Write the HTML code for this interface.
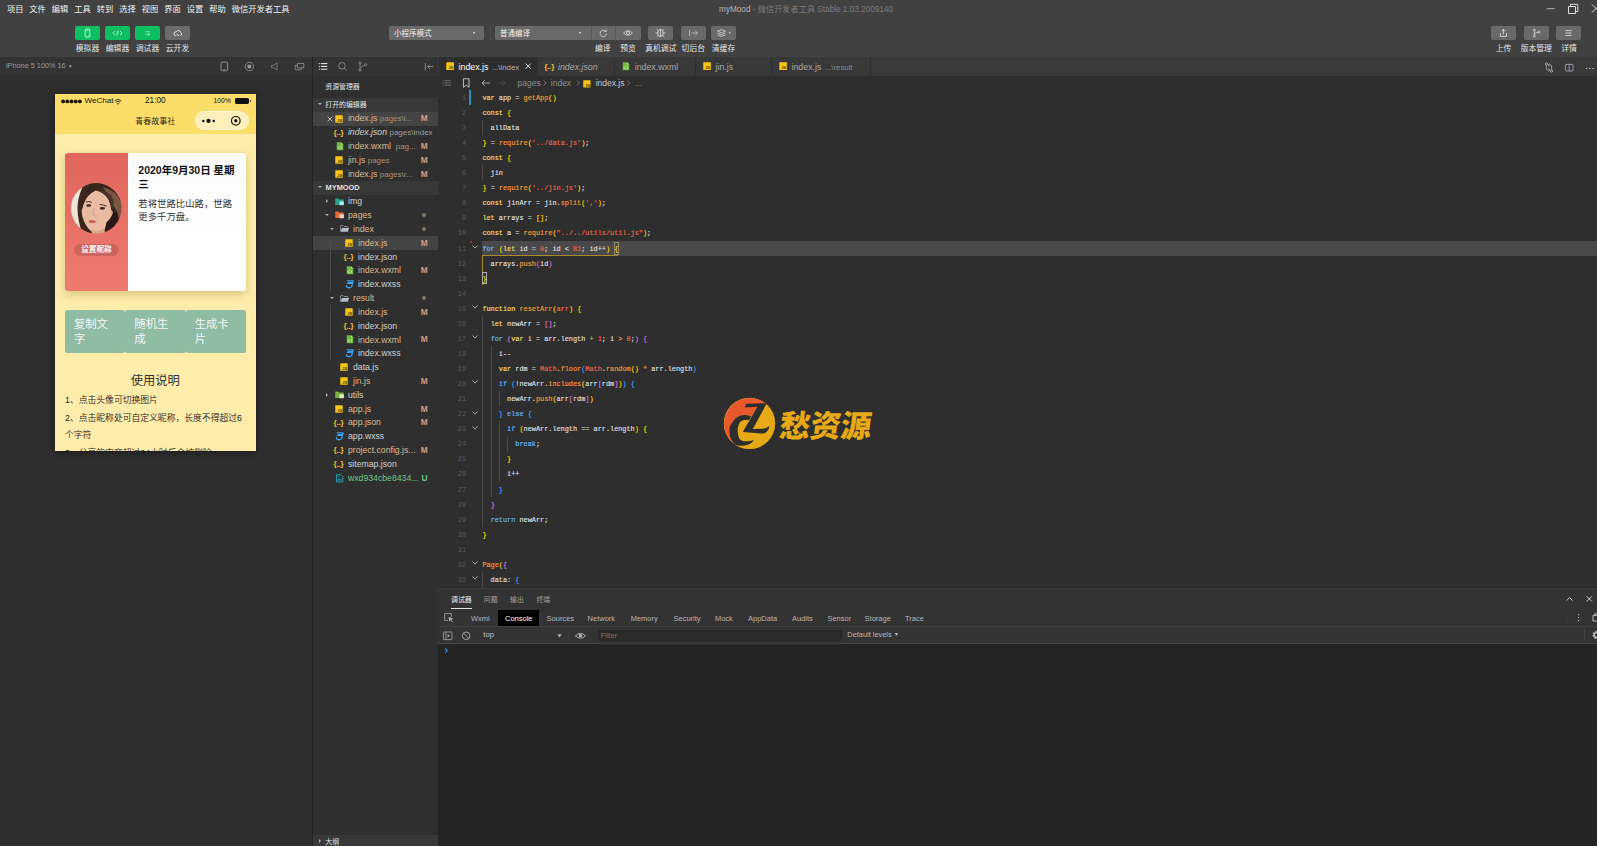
<!DOCTYPE html><html lang="zh"><head><meta charset="utf-8"><title>myMood</title><style>
*{box-sizing:border-box;margin:0;padding:0}
html,body{width:1597px;height:846px;overflow:hidden;background:#2e2e2e}
body{font-family:"Liberation Sans","Noto Sans CJK SC",sans-serif;color:#ddd;position:relative;font-size:8.2px}
.abs,.t{position:absolute;white-space:nowrap}
.t{line-height:12px;height:12px}
.c{transform:translateX(-50%)}
svg{position:absolute;overflow:visible}
#top{position:absolute;left:0;top:0;width:1597px;height:57px;background:#414141}
.menu{font-size:8.25px;color:#f0f0f0;top:3.7px}
.gbtn{position:absolute;top:26px;width:25px;height:14px;border-radius:2px;background:#0bbf62}
.gray{background:#6b6b6b}
.lbl{font-size:7.8px;color:#e6e6e6;top:42.9px}
.dd{position:absolute;top:26px;height:14px;background:#696969;border-radius:2px}
#simbar{position:absolute;left:0;top:57px;width:312px;height:18.3px;background:#333}
#sim{position:absolute;left:0;top:75.5px;width:312px;height:771px;background:#2e2e2e}
#vdiv{position:absolute;left:312px;top:57px;width:1px;height:789px;background:#232323}
#side{position:absolute;left:313px;top:57px;width:125px;height:789px;background:#2f2f2f}
#sidehead{position:absolute;left:0;top:0;width:125px;height:18.5px;background:#333}
.sec{position:absolute;left:0;width:125px;background:#383838}
.row{position:absolute;left:0;width:125px;height:13.82px}
.row.sel{background:#444}
.tree{font-size:8.7px;line-height:13.82px;height:13.82px;top:0.7px;color:#d0d0d0}
.mod{color:#dcb98e}
.unt{color:#6dc48c}
.dim{color:#9a9a9a;font-size:8px}.mod .dim{color:#a8906f}
.badge{position:absolute;top:0.6px;line-height:13.82px;font-size:8.3px;font-weight:bold;color:#cfa08a}
.dot{position:absolute;width:4px;height:4px;border-radius:2px;background:#86766a;left:109.3px;top:5px}
#ed{position:absolute;left:438px;top:57px;width:1159px;height:531px;background:#2e2e2e}
#tabs{position:absolute;left:0;top:0;width:1159px;height:18.8px;background:#393939}
.tab{position:absolute;top:0;height:18.8px;border-right:1px solid #2e2e2e;background:#383838}
.tab.act{background:#2e2e2e}
.tabt{font-size:8.8px;top:3.6px;color:#a8a8a8}
.code{position:absolute;left:44.4px;font-family:"Liberation Mono",monospace;font-size:6.87px;line-height:15.065px;height:15.065px;white-space:pre;color:#dcdcdc;-webkit-text-stroke:0.18px currentColor}
.ln{position:absolute;left:0;width:28px;text-align:right;font-family:"Liberation Mono",monospace;font-size:6.87px;line-height:15.065px;height:15.065px;color:#5a5a5a}
.k{color:#f0d868}.cl{color:#62b4f2}.f{color:#f09438}.s{color:#e8604c}.n{color:#e8604c}
.b1{color:#ffd700}.b2{color:#da70d6}.b3{color:#3aa0f5}.g{color:#8bc34a}
.ig{position:absolute;width:1px;background:#4a4a4a}
#panel{position:absolute;left:438px;top:588px;width:1159px;height:258px;background:#333}
.ptab{font-size:6.9px;color:#a0a0a0;top:5.6px}
.dt{font-size:7.5px;color:#b4b4b4;top:24.5px}
</style></head><body>
<div id="top">
<div class="t menu" style="left:7px">项目</div>
<div class="t menu" style="left:29.3px">文件</div>
<div class="t menu" style="left:51.8px">编辑</div>
<div class="t menu" style="left:74.2px">工具</div>
<div class="t menu" style="left:96.7px">转到</div>
<div class="t menu" style="left:119.2px">选择</div>
<div class="t menu" style="left:141.7px">视图</div>
<div class="t menu" style="left:164.2px">界面</div>
<div class="t menu" style="left:186.7px">设置</div>
<div class="t menu" style="left:209.2px">帮助</div>
<div class="t menu" style="left:231.8px">微信开发者工具</div>
<div class="t c" style="left:806px;top:4px;font-size:8.2px;color:#7c7c7c"><span style="color:#b4b4b4">myMood</span> - 微信开发者工具 Stable 1.03.2009140</div>
<svg style="left:1546px;top:3px" width="51" height="12" viewBox="0 0 51 12"><path d="M0.5 5.7h8" stroke="#aaa" stroke-width="1" fill="none"/><path d="M22.5 3.5h7v7h-7z M24.5 3.3v-2h7.3v7.3h-2" stroke="#ddd" stroke-width="1" fill="none"/><path d="M46 1.5l8 8M54 1.5l-8 8" stroke="#ddd" stroke-width="1" fill="none"/></svg>
<div class="gbtn " style="left:75px"><svg width="25" height="14" viewBox="0 0 25 14" style="left:0;top:0"><rect x="10.3" y="3" width="4.4" height="8" rx="0.6" fill="none" stroke="#e8fff2" stroke-width="0.9"/><path d="M11.3 4.6h2.4" stroke="#e8fff2" stroke-width="0.6"/></svg></div>
<div class="t lbl c" style="left:87.5px">模拟器</div>
<div class="gbtn " style="left:105px"><svg width="25" height="14" viewBox="0 0 25 14" style="left:0;top:0"><path d="M10 5l-2 2 2 2M15 5l2 2-2 2M13.3 4.6l-1.6 4.8" fill="none" stroke="#e8fff2" stroke-width="0.8"/></svg></div>
<div class="t lbl c" style="left:117.5px">编辑器</div>
<div class="gbtn " style="left:135px"><svg width="25" height="14" viewBox="0 0 25 14" style="left:0;top:0"><path d="M10.2 5.8h4.4l-1-1M14.8 8.4h-4.2M13 7.2l1.8 1.2-1.6 1.2" fill="none" stroke="#b4efd0" stroke-width="0.7"/></svg></div>
<div class="t lbl c" style="left:147.5px">调试器</div>
<div class="gbtn gray" style="left:165px"><svg width="25" height="14" viewBox="0 0 25 14" style="left:0;top:0"><path d="M10.8 9.8a2 2 0 0 1 0.4-4a2.4 2.4 0 0 1 4.4 0.6a1.8 1.8 0 0 1-0.4 3.4M11.5 8.2l2.5 1.6" fill="none" stroke="#eee" stroke-width="0.9"/></svg></div>
<div class="t lbl c" style="left:177.5px">云开发</div>
<div class="dd" style="left:389px;width:95px"><div class="t" style="left:5px;top:2.3px;font-size:7.5px;color:#f0f0f0">小程序模式</div><div class="abs" style="left:83.5px;top:6px;border:1.5px solid transparent;border-top:2px solid #eee"></div></div>
<div class="abs" style="left:489.5px;top:26px;width:1px;height:14px;background:#505050"></div>
<div class="dd" style="left:495px;width:146px"><div class="t" style="left:5px;top:2.3px;font-size:7.5px;color:#f0f0f0">普通编译</div><div class="abs" style="left:84px;top:6px;border:1.5px solid transparent;border-top:2px solid #eee"></div><div class="abs" style="left:95.5px;top:0;width:1px;height:14px;background:#5a5a5a"></div><div class="abs" style="left:120.3px;top:0;width:1px;height:14px;background:#5a5a5a"></div><svg width="146" height="14" viewBox="0 0 146 14" style="left:0;top:0"><path d="M110.6 5.2a3.2 3.2 0 1 0 0.9 2.6M111.3 3.4v2.2h-2.2" fill="none" stroke="#ddd" stroke-width="0.8"/><path d="M128.6 7q4.4-4.6 8.8 0q-4.4 4.6-8.8 0z" fill="none" stroke="#ddd" stroke-width="0.8"/><circle cx="133" cy="7" r="1.5" fill="none" stroke="#ddd" stroke-width="0.8"/></svg></div>
<div class="dd" style="left:648px;width:25px"><svg width="25" height="14" viewBox="0 0 25 14" style="left:0;top:0"><path d="M12.5 3.4a2.6 3.6 0 0 1 0 7.2a2.6 3.6 0 0 1 0-7.2zM12.5 3.6v7M9.9 7H7.6M15.1 7h2.3M10.3 4.6l-1.6-1.3M14.7 4.6l1.6-1.3M10.3 9.4l-1.6 1.3M14.7 9.4l1.6 1.3" fill="none" stroke="#e4e4e4" stroke-width="0.8"/></svg></div>
<div class="dd" style="left:681px;width:25px"><svg width="25" height="14" viewBox="0 0 25 14" style="left:0;top:0"><path d="M8.6 4v6M10.5 7h6M14.4 4.8l2.2 2.2-2.2 2.2" fill="none" stroke="#c8c8c8" stroke-width="0.8"/></svg></div>
<div class="dd" style="left:711px;width:25px"><svg width="25" height="14" viewBox="0 0 25 14" style="left:0;top:0"><path d="M10.5 3.6l4 1.6-4 1.6-4-1.6zM6.5 7l4 1.6 4-1.6M6.5 8.8l4 1.6 4-1.6" fill="none" stroke="#ddd" stroke-width="0.75"/><path d="M17.6 6.4h2.2l-1.1 1.4z" fill="#eee"/></svg></div>
<div class="t lbl c" style="left:602.7px">编译</div>
<div class="t lbl c" style="left:628px">预览</div>
<div class="t lbl c" style="left:660.8px">真机调试</div>
<div class="t lbl c" style="left:693.3px">切后台</div>
<div class="t lbl c" style="left:723.5px">清缓存</div>
<div class="dd" style="left:1491px;width:25px"><svg width="25" height="14" viewBox="0 0 25 14" style="left:0;top:0"><path d="M9.5 7v3.4h6V7M12.5 8.6V3.4M10.6 5.2l1.9-1.9 1.9 1.9" fill="none" stroke="#e4e4e4" stroke-width="0.8"/></svg></div>
<div class="dd" style="left:1524px;width:25px"><svg width="25" height="14" viewBox="0 0 25 14" style="left:0;top:0"><circle cx="10.4" cy="4.2" r="1" fill="none" stroke="#e4e4e4" stroke-width="0.7"/><circle cx="10.4" cy="10" r="1" fill="none" stroke="#e4e4e4" stroke-width="0.7"/><circle cx="15" cy="6" r="1" fill="none" stroke="#e4e4e4" stroke-width="0.7"/><path d="M10.4 5.2v3.8M10.4 8.6q0.4-1.8 3.6-2.2" fill="none" stroke="#e4e4e4" stroke-width="0.7"/></svg></div>
<div class="dd" style="left:1556.3px;width:25px"><svg width="25" height="14" viewBox="0 0 25 14" style="left:0;top:0"><path d="M9.5 4.6h6M9.5 7h6M9.5 9.4h6" fill="none" stroke="#e4e4e4" stroke-width="0.8"/></svg></div>
<div class="t lbl c" style="left:1503.6px">上传</div>
<div class="t lbl c" style="left:1536.3px">版本管理</div>
<div class="t lbl c" style="left:1569px">详情</div>
</div>
<div id="simbar"><div class="t" style="left:6px;top:3.3px;font-size:7.3px;color:#9a9a9a">iPhone 5 100% 16 <span style="font-size:5px;position:relative;top:-0.8px">▼</span></div>
<svg width="312" height="18.5" viewBox="0 0 312 18.5" style="left:0;top:0"><rect x="221" y="5.2" width="6.6" height="8.6" rx="1" fill="none" stroke="#aaa" stroke-width="0.8"/><path d="M223.3 12.5h2" stroke="#aaa" stroke-width="0.6"/><circle cx="249.4" cy="9.5" r="4.2" fill="none" stroke="#999" stroke-width="0.8"/><rect x="247.6" y="7.7" width="3.6" height="3.6" rx="0.6" fill="#999"/><path d="M271.6 8.3h1.8l3.6-2.4v7.2l-3.6-2.4h-1.8z" fill="none" stroke="#888" stroke-width="0.8"/><path d="M297.4 6.4h6.4v4.4h-6.4zM297 8.4h-1.8v4.4h6.2v-1.6" fill="none" stroke="#999" stroke-width="0.8"/></svg></div>
<div id="sim">
<div class="abs" style="left:55px;top:18.5px;width:201px;height:357px;background:#fdecaa;box-shadow:0 1px 7px rgba(0,0,0,.45);overflow:hidden;color:#222">
<div class="abs" style="left:0;top:0;width:201px;height:40px;background:#fbde6a"></div>
<div class="t" style="left:29.6px;top:1.1px;font-size:8.05px;color:#111">WeChat</div><svg width="22" height="5" viewBox="0 0 22 5" style="left:6px;top:4.9px"><circle cx="2.1" cy="2.4" r="1.95" fill="#1a1600"/><circle cx="6.3" cy="2.4" r="1.95" fill="#1a1600"/><circle cx="10.5" cy="2.4" r="1.95" fill="#1a1600"/><circle cx="14.7" cy="2.4" r="1.95" fill="#1a1600"/><circle cx="18.9" cy="2.4" r="1.95" fill="#1a1600"/></svg>
<svg width="8" height="6" viewBox="0 0 8 6" style="left:58.6px;top:4.6px"><path d="M0.6 2a4.8 4.8 0 0 1 6.8 0M1.8 3.3a3.1 3.1 0 0 1 4.4 0" fill="none" stroke="#2a2500" stroke-width="0.9"/><circle cx="4" cy="4.7" r="0.8" fill="#2a2500"/></svg>
<div class="t c" style="left:100.3px;top:1px;font-size:8.2px;color:#111">21:00</div>
<div class="t" style="left:158.5px;top:1.2px;font-size:6.8px;color:#111">100%</div>
<div class="abs" style="left:180px;top:4.2px;width:14.3px;height:5.6px;border:0.8px solid #111;border-radius:1.2px;background:#111"></div><div class="abs" style="left:194.6px;top:5.8px;width:1.2px;height:2.4px;background:#111;border-radius:0 1px 1px 0"></div>
<div class="t c" style="left:100.3px;top:21.6px;font-size:8px;color:#2a2a1a">青春故事社</div>
<div class="abs" style="left:140px;top:17px;width:54.2px;height:19.2px;border-radius:9.6px;background:#fdf0bc;border:0.5px solid rgba(255,255,255,.35)"></div>
<svg width="55" height="20" viewBox="0 0 55 20" style="left:140px;top:17px"><circle cx="8.3" cy="9.9" r="1.25" fill="#111"/><circle cx="13.5" cy="9.9" r="2.1" fill="#111"/><circle cx="18.7" cy="9.9" r="1.25" fill="#111"/><circle cx="40.8" cy="9.8" r="4.3" fill="none" stroke="#111" stroke-width="1.2"/><circle cx="40.8" cy="9.8" r="1.7" fill="#111"/></svg>
<div class="abs" style="left:10px;top:59px;width:181px;height:138.4px;border-radius:3px;background:linear-gradient(#fafafa,#fff 60%);box-shadow:0 3px 8px rgba(110,85,0,.28);overflow:hidden">
<div class="abs" style="left:0;top:0;width:63px;height:138.4px;background:linear-gradient(#e0665e,#ee7b70)"></div>
<svg width="50.6" height="50.6" viewBox="0 0 100 100" style="left:5.8px;top:30.1px"><defs><clipPath id="av"><circle cx="50" cy="50" r="50"/></clipPath><filter id="bl" x="-10%" y="-10%" width="120%" height="120%"><feGaussianBlur stdDeviation="1.3"/></filter></defs><g clip-path="url(#av)"><g filter="url(#bl)"><rect x="-5" y="-5" width="110" height="110" fill="#3a251e"/><path d="M-5 -5H30Q15 18 13 45Q12 72 24 105H-5z" fill="#ebe5d8"/><path d="M62 8Q90 14 100 40Q104 60 96 78Q92 50 78 30Q70 18 62 8z" fill="#7a5642"/><path d="M70 22Q86 34 90 56Q84 40 70 22z" fill="#9a7458"/><path d="M49 15Q38 19 30 30Q22 42 21 54Q21 66 26 76Q32 90 42 97L44 105H66L66 92Q74 84 78 72Q84 62 80 52Q78 36 70 26Q62 17 49 15z" fill="#e9bba2"/><path d="M40 92Q52 100 66 88L67 105H42z" fill="#d9a589"/><path d="M49 15Q38 19 29 32Q24 42 21 56Q17 38 27 24Q37 12 49 15z" fill="#3a251e"/><path d="M49 15Q64 18 74 32Q79 44 80 56Q88 44 82 30Q72 12 49 15z" fill="#4a3026"/><path d="M78 54Q86 56 82 68Q80 72 77 70z" fill="#e3b096"/><path d="M70 78Q80 70 84 56Q96 60 92 80Q84 98 68 100Q66 90 70 78z" fill="#2a1813"/><ellipse cx="35" cy="44.5" rx="5" ry="2.6" fill="#3b2a26"/><ellipse cx="62" cy="50" rx="5.4" ry="2.8" fill="#3b2a26"/><path d="M29 37.5Q35 35.5 41 38.5M56 42.5Q64 42 70 46" stroke="#5a3c30" stroke-width="2" fill="none"/><path d="M46 50Q42 60 45 64Q48 66 52 64" stroke="#d9a084" stroke-width="2" fill="none"/><path d="M35 74Q42 72 51 76Q44 82 36 78z" fill="#c9655e"/></g></g></svg>
<div class="abs" style="left:8.8px;top:90.7px;width:45.3px;height:12.3px;border-radius:6.2px;background:rgba(0,0,0,.13)"></div>
<div class="t c" style="left:31.4px;top:90.9px;font-size:7.6px;font-weight:bold;color:#fff">设置昵称</div>
<div class="abs" style="left:73.3px;top:11.4px;width:104px;font-size:10.5px;font-weight:bold;line-height:13.6px;color:#111;white-space:normal">2020年9月30日 星期三</div>
<div class="abs" style="left:73.3px;top:43.5px;width:100px;font-size:9.4px;line-height:13.9px;color:#333;white-space:normal">若将世路比山路，世路更多千万盘。</div>
</div>
<div class="abs" style="left:10.00px;top:216px;width:60.33px;height:43px;border-radius:2.5px;background:#90bba5"></div>
<div class="abs" style="left:19.00px;top:222.8px;font-size:11.3px;line-height:14.7px;color:#f4f8f5">复制文<br>字</div>
<div class="abs" style="left:70.33px;top:216px;width:60.33px;height:43px;border-radius:2.5px;background:#90bba5"></div>
<div class="abs" style="left:79.33px;top:222.8px;font-size:11.3px;line-height:14.7px;color:#f4f8f5">随机生<br>成</div>
<div class="abs" style="left:130.66px;top:216px;width:60.33px;height:43px;border-radius:2.5px;background:#90bba5"></div>
<div class="abs" style="left:139.66px;top:222.8px;font-size:11.3px;line-height:14.7px;color:#f4f8f5">生成卡<br>片</div>
<div class="t c" style="left:100.3px;top:279px;font-size:12.3px;line-height:16px;height:16px;color:#333">使用说明</div>
<div class="abs" style="left:10px;top:298px;width:181px;font-size:8.8px;line-height:17.55px;font-weight:350;color:#222;white-space:normal">1、点击头像可切换图片<br>2、点击昵称处可自定义昵称，长度不得超过6个字符<br>3、分享的内容超过24小时后会被删除</div>
</div>
</div>
<div id="vdiv"></div>
<div id="side"><div id="sidehead"><svg width="125" height="18.5" viewBox="0 0 125 18.5" style="left:0;top:0"><path d="M7.9 6.6h6.4M7.9 9.4h6.4M7.9 12.2h6.4" stroke="#f0f0f0" stroke-width="1"/><path d="M5.9 6.6h1M5.9 9.4h1M5.9 12.2h1" stroke="#f0f0f0" stroke-width="1"/><circle cx="29" cy="8.8" r="3.3" fill="none" stroke="#999" stroke-width="0.8"/><path d="M31.4 11.4l2.2 2.2" stroke="#999" stroke-width="0.8"/><circle cx="47" cy="6" r="1.1" fill="none" stroke="#999" stroke-width="0.7"/><circle cx="47" cy="13" r="1.1" fill="none" stroke="#999" stroke-width="0.7"/><circle cx="52.6" cy="7.8" r="1.1" fill="none" stroke="#999" stroke-width="0.7"/><path d="M47 7.1v4.8M47 11.6q0.6-2.4 4.6-3.2" fill="none" stroke="#999" stroke-width="0.7"/><path d="M112.4 6v7.2" stroke="#7b6fa8" stroke-width="1.2"/><path d="M120.4 9.6h-5.6M116.6 7.6l-2 2 2 2" fill="none" stroke="#999" stroke-width="0.8"/></svg></div>
<div class="t" style="left:12.3px;top:24.4px;font-size:6.9px;color:#e0e0e0">资源管理器</div>
<div class="sec" style="top:41px;height:14px"></div>
<div class="abs" style="left:4.6px;top:46.4px;border:2.1px solid transparent;border-top:2.6px solid #b0b0b0;border-bottom:0"></div>
<div class="t" style="left:12.3px;top:42.4px;font-size:6.9px;color:#e6e6e6">打开的编辑器</div>
<div class="row sel" style="top:54.70px"><svg width="6" height="6" viewBox="0 0 6 6" style="left:14px;top:4px"><path d="M0.6 0.6l4.8 4.8M5.4 0.6l-4.8 4.8" stroke="#d8d8d8" stroke-width="0.8"/></svg><svg width="8" height="8" viewBox="0 0 16 16" style="left:22.099999999999998px;top:2.9px"><rect x="0.5" y="0.5" width="15" height="15" rx="1" fill="#f5c518"/><text x="4.6" y="13.6" font-family="Liberation Sans,sans-serif" font-weight="bold" font-size="8" fill="#4a3b00">JS</text></svg><div class="t tree mod" style="left:34.9px;">index.js <span class="dim">pages\i...</span></div><div class="badge" style="left:107.8px;color:#cfa08a">M</div></div>
<div class="row" style="top:68.52px"><div class="abs" style="left:20.499999999999996px;top:0;line-height:13px;font-size:8.1px;font-weight:bold;color:#f2c230;letter-spacing:-0.3px">{<span style="position:relative;top:0.6px;letter-spacing:-0.2px">..</span>}</div><div class="t tree " style="left:34.9px;font-style:italic;">index.json <span class="dim" style="font-style:normal">pages\index</span></div></div>
<div class="row" style="top:82.34px"><svg width="8" height="8.6" viewBox="0 0 16 17" style="left:22.499999999999996px;top:2.6px"><path d="M1.5 0.5h8.5l4.5 4.5v11.5h-13z" fill="#72b840"/><path d="M10 0.5v4.5h4.5" fill="#b7e08e"/><path d="M6.6 8.6l-2.6 2.6 2.6 2.6M9.4 8.6l2.6 2.6-2.6 2.6" stroke="#e8ffd8" stroke-width="1.6" fill="none"/></svg><div class="t tree mod" style="left:34.9px;">index.wxml&nbsp; <span class="dim">pag...</span></div><div class="badge" style="left:107.8px;color:#cfa08a">M</div></div>
<div class="row" style="top:96.16px"><svg width="8" height="8" viewBox="0 0 16 16" style="left:22.099999999999998px;top:2.9px"><rect x="0.5" y="0.5" width="15" height="15" rx="1" fill="#f5c518"/><text x="4.6" y="13.6" font-family="Liberation Sans,sans-serif" font-weight="bold" font-size="8" fill="#4a3b00">JS</text></svg><div class="t tree mod" style="left:34.9px;">jin.js <span class="dim">pages</span></div><div class="badge" style="left:107.8px;color:#cfa08a">M</div></div>
<div class="row" style="top:109.98px"><svg width="8" height="8" viewBox="0 0 16 16" style="left:22.099999999999998px;top:2.9px"><rect x="0.5" y="0.5" width="15" height="15" rx="1" fill="#f5c518"/><text x="4.6" y="13.6" font-family="Liberation Sans,sans-serif" font-weight="bold" font-size="8" fill="#4a3b00">JS</text></svg><div class="t tree mod" style="left:34.9px;">index.js <span class="dim">pages\r...</span></div><div class="badge" style="left:107.8px;color:#cfa08a">M</div></div>
<div class="sec" style="top:123.80px;height:13.82px"></div>
<div class="abs" style="left:4.6px;top:129.20px;border:2.1px solid transparent;border-top:2.6px solid #b0b0b0;border-bottom:0"></div>
<div class="t" style="left:12.6px;top:124.70px;font-size:7.4px;font-weight:bold;color:#e0e0e0">MYMOOD</div>
<div class="row" style="top:137.62px"><div class="abs" style="left:12.799999999999999px;top:4.8px;border:2.1px solid transparent;border-left:2.6px solid #b0b0b0;border-right:0"></div><svg width="9.4" height="8" viewBox="0 0 19 16" style="left:21.599999999999998px;top:2.9px"><path d="M0.5 2q0-1.2 1.2-1.2h4.6l1.8 2h8.2q1.2 0 1.2 1.2v9q0 1.2-1.2 1.2H1.7q-1.2 0-1.2-1.2z" fill="#26a588"/><rect x="9" y="6.4" width="9" height="8.4" rx="1.6" fill="#a8e6f0"/></svg><div class="t tree " style="left:35px;">img</div></div>
<div class="row" style="top:151.44px"><div class="abs" style="left:12.2px;top:5.6px;border:2.1px solid transparent;border-top:2.6px solid #b0b0b0;border-bottom:0"></div><svg width="9.4" height="8" viewBox="0 0 19 16" style="left:21.599999999999998px;top:2.9px"><path d="M0.5 2q0-1.2 1.2-1.2h4.6l1.8 2h8.2q1.2 0 1.2 1.2v9q0 1.2-1.2 1.2H1.7q-1.2 0-1.2-1.2z" fill="#e8663c"/><rect x="9" y="6.4" width="9" height="8.4" rx="1.6" fill="#ffcfc0"/></svg><div class="t tree mod" style="left:35px;">pages</div><div class="dot"></div></div>
<div class="row" style="top:165.26px"><div class="abs" style="left:17.2px;top:5.6px;border:2.1px solid transparent;border-top:2.6px solid #b0b0b0;border-bottom:0"></div><svg width="9.6" height="7.6" viewBox="0 0 20 16" style="left:26.599999999999998px;top:3.1999999999999997px"><path d="M1 14V2.2q0-1 1-1h4.4l1.8 2h7.6q1 0 1 1v2" fill="none" stroke="#9aa4ae" stroke-width="1.6"/><path d="M1 14.4l3-8h15.2l-3 8z" fill="#b4bec8"/></svg><div class="t tree mod" style="left:40px;">index</div><div class="dot"></div></div>
<div class="row sel" style="top:179.08px"><svg width="8" height="8" viewBox="0 0 16 16" style="left:32.2px;top:2.9px"><rect x="0.5" y="0.5" width="15" height="15" rx="1" fill="#f5c518"/><text x="4.6" y="13.6" font-family="Liberation Sans,sans-serif" font-weight="bold" font-size="8" fill="#4a3b00">JS</text></svg><div class="t tree mod" style="left:45px;">index.js</div><div class="badge" style="left:107.8px;color:#cfa08a">M</div></div>
<div class="row" style="top:192.90px"><div class="abs" style="left:30.6px;top:0;line-height:13px;font-size:8.1px;font-weight:bold;color:#f2c230;letter-spacing:-0.3px">{<span style="position:relative;top:0.6px;letter-spacing:-0.2px">..</span>}</div><div class="t tree " style="left:45px;">index.json</div></div>
<div class="row" style="top:206.72px"><svg width="8" height="8.6" viewBox="0 0 16 17" style="left:32.6px;top:2.6px"><path d="M1.5 0.5h8.5l4.5 4.5v11.5h-13z" fill="#72b840"/><path d="M10 0.5v4.5h4.5" fill="#b7e08e"/><path d="M6.6 8.6l-2.6 2.6 2.6 2.6M9.4 8.6l2.6 2.6-2.6 2.6" stroke="#e8ffd8" stroke-width="1.6" fill="none"/></svg><div class="t tree mod" style="left:45px;">index.wxml</div><div class="badge" style="left:107.8px;color:#cfa08a">M</div></div>
<div class="row" style="top:220.54px"><svg width="9" height="8.6" viewBox="0 0 18 17" style="left:31.900000000000002px;top:2.6px"><path d="M3.4 1.4h13l-0.9 3H5.6M14.8 6.8H3.6M15.5 4.4l-2.2 9-5.4 2.2-5.2-2.2 0.7-3" fill="none" stroke="#3ea3f0" stroke-width="2.4" stroke-linejoin="round"/></svg><div class="t tree " style="left:45px;">index.wxss</div></div>
<div class="row" style="top:234.36px"><div class="abs" style="left:17.2px;top:5.6px;border:2.1px solid transparent;border-top:2.6px solid #b0b0b0;border-bottom:0"></div><svg width="9.6" height="7.6" viewBox="0 0 20 16" style="left:26.599999999999998px;top:3.1999999999999997px"><path d="M1 14V2.2q0-1 1-1h4.4l1.8 2h7.6q1 0 1 1v2" fill="none" stroke="#9aa4ae" stroke-width="1.6"/><path d="M1 14.4l3-8h15.2l-3 8z" fill="#b4bec8"/></svg><div class="t tree mod" style="left:40px;">result</div><div class="dot"></div></div>
<div class="row" style="top:248.18px"><svg width="8" height="8" viewBox="0 0 16 16" style="left:32.2px;top:2.9px"><rect x="0.5" y="0.5" width="15" height="15" rx="1" fill="#f5c518"/><text x="4.6" y="13.6" font-family="Liberation Sans,sans-serif" font-weight="bold" font-size="8" fill="#4a3b00">JS</text></svg><div class="t tree mod" style="left:45px;">index.js</div><div class="badge" style="left:107.8px;color:#cfa08a">M</div></div>
<div class="row" style="top:262.00px"><div class="abs" style="left:30.6px;top:0;line-height:13px;font-size:8.1px;font-weight:bold;color:#f2c230;letter-spacing:-0.3px">{<span style="position:relative;top:0.6px;letter-spacing:-0.2px">..</span>}</div><div class="t tree " style="left:45px;">index.json</div></div>
<div class="row" style="top:275.82px"><svg width="8" height="8.6" viewBox="0 0 16 17" style="left:32.6px;top:2.6px"><path d="M1.5 0.5h8.5l4.5 4.5v11.5h-13z" fill="#72b840"/><path d="M10 0.5v4.5h4.5" fill="#b7e08e"/><path d="M6.6 8.6l-2.6 2.6 2.6 2.6M9.4 8.6l2.6 2.6-2.6 2.6" stroke="#e8ffd8" stroke-width="1.6" fill="none"/></svg><div class="t tree mod" style="left:45px;">index.wxml</div><div class="badge" style="left:107.8px;color:#cfa08a">M</div></div>
<div class="row" style="top:289.64px"><svg width="9" height="8.6" viewBox="0 0 18 17" style="left:31.900000000000002px;top:2.6px"><path d="M3.4 1.4h13l-0.9 3H5.6M14.8 6.8H3.6M15.5 4.4l-2.2 9-5.4 2.2-5.2-2.2 0.7-3" fill="none" stroke="#3ea3f0" stroke-width="2.4" stroke-linejoin="round"/></svg><div class="t tree " style="left:45px;">index.wxss</div></div>
<div class="row" style="top:303.46px"><svg width="8" height="8" viewBox="0 0 16 16" style="left:27.2px;top:2.9px"><rect x="0.5" y="0.5" width="15" height="15" rx="1" fill="#f5c518"/><text x="4.6" y="13.6" font-family="Liberation Sans,sans-serif" font-weight="bold" font-size="8" fill="#4a3b00">JS</text></svg><div class="t tree " style="left:40px;">data.js</div></div>
<div class="row" style="top:317.28px"><svg width="8" height="8" viewBox="0 0 16 16" style="left:27.2px;top:2.9px"><rect x="0.5" y="0.5" width="15" height="15" rx="1" fill="#f5c518"/><text x="4.6" y="13.6" font-family="Liberation Sans,sans-serif" font-weight="bold" font-size="8" fill="#4a3b00">JS</text></svg><div class="t tree mod" style="left:40px;">jin.js</div><div class="badge" style="left:107.8px;color:#cfa08a">M</div></div>
<div class="row" style="top:331.10px"><div class="abs" style="left:12.799999999999999px;top:4.8px;border:2.1px solid transparent;border-left:2.6px solid #b0b0b0;border-right:0"></div><svg width="9.4" height="8" viewBox="0 0 19 16" style="left:21.599999999999998px;top:2.9px"><path d="M0.5 2q0-1.2 1.2-1.2h4.6l1.8 2h8.2q1.2 0 1.2 1.2v9q0 1.2-1.2 1.2H1.7q-1.2 0-1.2-1.2z" fill="#7cb342"/><rect x="9" y="6.4" width="9" height="8.4" rx="1.6" fill="#dcedc8"/></svg><div class="t tree " style="left:35px;">utils</div></div>
<div class="row" style="top:344.92px"><svg width="8" height="8" viewBox="0 0 16 16" style="left:22.2px;top:2.9px"><rect x="0.5" y="0.5" width="15" height="15" rx="1" fill="#f5c518"/><text x="4.6" y="13.6" font-family="Liberation Sans,sans-serif" font-weight="bold" font-size="8" fill="#4a3b00">JS</text></svg><div class="t tree mod" style="left:35px;">app.js</div><div class="badge" style="left:107.8px;color:#cfa08a">M</div></div>
<div class="row" style="top:358.74px"><div class="abs" style="left:20.599999999999998px;top:0;line-height:13px;font-size:8.1px;font-weight:bold;color:#f2c230;letter-spacing:-0.3px">{<span style="position:relative;top:0.6px;letter-spacing:-0.2px">..</span>}</div><div class="t tree mod" style="left:35px;">app.json</div><div class="badge" style="left:107.8px;color:#cfa08a">M</div></div>
<div class="row" style="top:372.56px"><svg width="9" height="8.6" viewBox="0 0 18 17" style="left:21.9px;top:2.6px"><path d="M3.4 1.4h13l-0.9 3H5.6M14.8 6.8H3.6M15.5 4.4l-2.2 9-5.4 2.2-5.2-2.2 0.7-3" fill="none" stroke="#3ea3f0" stroke-width="2.4" stroke-linejoin="round"/></svg><div class="t tree " style="left:35px;">app.wxss</div></div>
<div class="row" style="top:386.38px"><div class="abs" style="left:20.599999999999998px;top:0;line-height:13px;font-size:8.1px;font-weight:bold;color:#f2c230;letter-spacing:-0.3px">{<span style="position:relative;top:0.6px;letter-spacing:-0.2px">..</span>}</div><div class="t tree mod" style="left:35px;">project.config.js...</div><div class="badge" style="left:107.8px;color:#cfa08a">M</div></div>
<div class="row" style="top:400.20px"><div class="abs" style="left:20.599999999999998px;top:0;line-height:13px;font-size:8.1px;font-weight:bold;color:#f2c230;letter-spacing:-0.3px">{<span style="position:relative;top:0.6px;letter-spacing:-0.2px">..</span>}</div><div class="t tree " style="left:35px;">sitemap.json</div></div>
<div class="row" style="top:414.02px"><svg width="7.4" height="8.6" viewBox="0 0 15 17" style="left:22.8px;top:2.6px"><path d="M1 1h8.5l4.5 4.5v10.5h-13z" fill="none" stroke="#26a6b8" stroke-width="1.8"/><path d="M2 13l3.6-4 2.6 2.6 2-1.6 2.8 3z" fill="#26a6b8"/><circle cx="5" cy="5.4" r="1.4" fill="#26a6b8"/></svg><div class="t tree unt" style="left:35px;">wxd934cbe8434...</div><div class="badge" style="left:108.6px;color:#6dc48c">U</div></div>
<div class="ig" style="left:17.4px;top:179.08px;height:55.28px"></div>
<div class="ig" style="left:17.4px;top:248.18px;height:55.28px"></div>
<div class="sec" style="top:778px;height:11px"></div>
<div class="abs" style="left:5.6px;top:782px;border:2.1px solid transparent;border-left:2.6px solid #b0b0b0;border-right:0"></div>
<div class="t" style="left:12.3px;top:778.8px;font-size:6.9px;color:#e6e6e6">大纲</div>
</div>
<div id="ed"><div id="tabs">
<div class="tab act" style="left:1px;width:99px"><svg width="8.2" height="8.2" viewBox="0 0 16 16" style="left:6.9px;top:4.9px"><rect x="0.5" y="0.5" width="15" height="15" rx="1" fill="#f5c518"/><text x="4.6" y="13.6" font-family="Liberation Sans,sans-serif" font-weight="bold" font-size="8" fill="#4a3b00">JS</text></svg><div class="t tabt" style="left:19.6px;color:#fff">index.js <span style="font-size:7.8px;color:#b0b0b0;margin-left:1px">...\index</span></div><svg width="6.4" height="6.4" viewBox="0 0 6.4 6.4" style="left:85.6px;top:6.3px"><path d="M0.6 0.6l5.2 5.2M5.8 0.6l-5.2 5.2" stroke="#f0f0f0" stroke-width="0.9"/></svg></div>
<div class="tab" style="left:100px;width:77px"><div class="abs" style="left:6.199999999999999px;top:2.6px;line-height:13px;font-size:8.1px;font-weight:bold;color:#f2c230;letter-spacing:-0.3px">{<span style="position:relative;top:0.6px;letter-spacing:-0.2px">..</span>}</div><div class="t tabt" style="left:20px;font-style:italic">index.json</div></div>
<div class="tab" style="left:177px;width:81px"><svg width="8" height="8.6" viewBox="0 0 16 17" style="left:6.7px;top:5px"><path d="M1.5 0.5h8.5l4.5 4.5v11.5h-13z" fill="#72b840"/><path d="M10 0.5v4.5h4.5" fill="#b7e08e"/><path d="M6.6 8.6l-2.6 2.6 2.6 2.6M9.4 8.6l2.6 2.6-2.6 2.6" stroke="#e8ffd8" stroke-width="1.6" fill="none"/></svg><div class="t tabt" style="left:19.7px">index.wxml</div></div>
<div class="tab" style="left:258px;width:76px"><svg width="8.2" height="8.2" viewBox="0 0 16 16" style="left:6.6px;top:4.9px"><rect x="0.5" y="0.5" width="15" height="15" rx="1" fill="#f5c518"/><text x="4.6" y="13.6" font-family="Liberation Sans,sans-serif" font-weight="bold" font-size="8" fill="#4a3b00">JS</text></svg><div class="t tabt" style="left:19.5px">jin.js</div></div>
<div class="tab" style="left:334px;width:99px"><svg width="8.2" height="8.2" viewBox="0 0 16 16" style="left:6.6px;top:4.9px"><rect x="0.5" y="0.5" width="15" height="15" rx="1" fill="#f5c518"/><text x="4.6" y="13.6" font-family="Liberation Sans,sans-serif" font-weight="bold" font-size="8" fill="#4a3b00">JS</text></svg><div class="t tabt" style="left:19.5px">index.js <span style="font-size:7.8px;color:#8a8a8a;margin-left:1px">...\result</span></div></div>
<svg width="60" height="18.5" viewBox="0 0 60 18.5" style="left:1099px;top:0"><circle cx="9.4" cy="7" r="1.1" fill="none" stroke="#ccc" stroke-width="0.7"/><circle cx="14.6" cy="14" r="1.1" fill="none" stroke="#ccc" stroke-width="0.7"/><path d="M9.4 8.1v3.6q0 1.4 1.4 1.4h1.2M14.6 12.9V9.3q0-1.4-1.4-1.4h-1.2M11.6 11.6l1.4 1.5-1.4 1.5M12.6 6.4l-1.4 1.5 1.4 1.5" fill="none" stroke="#ccc" stroke-width="0.7"/><rect x="28.4" y="7.4" width="7.6" height="6.6" rx="0.6" fill="none" stroke="#b8a8c8" stroke-width="0.8"/><path d="M32.2 7.4v6.6" stroke="#b8a8c8" stroke-width="0.8"/><circle cx="49.6" cy="11.4" r="0.7" fill="#ccc"/><circle cx="52.8" cy="11.4" r="0.7" fill="#ccc"/><circle cx="56" cy="11.4" r="0.7" fill="#ccc"/></svg>
</div>
<svg width="80" height="14" viewBox="0 0 80 14" style="left:0;top:19.4px"><path d="M6.6 4.8h6.4M6.6 7h6.4M6.6 9.2h6.4" stroke="#7c7c7c" stroke-width="0.8"/><path d="M4.6 4.8h1M4.6 7h1M4.6 9.2h1" stroke="#7c7c7c" stroke-width="0.8"/><path d="M25.4 2.8h5.6v8.6l-2.8-2.4-2.8 2.4z" fill="none" stroke="#c8c8c8" stroke-width="0.9"/><path d="M52 7h-8M46.8 4.2l-2.8 2.8 2.8 2.8" fill="none" stroke="#c0c0c0" stroke-width="0.8"/><path d="M61 7h6.4M64.8 4.4l2.6 2.6-2.6 2.6" fill="none" stroke="#555" stroke-width="0.8"/></svg>
<div class="t" style="left:79.5px;top:20.2px;font-size:8.5px;color:#8c8c8c">pages</div>
<div class="t" style="left:112.8px;top:20.2px;font-size:8.5px;color:#8c8c8c">index</div>
<div class="t" style="left:157.7px;top:20.2px;font-size:8.5px;color:#c8c8c8">index.js</div>
<div class="t" style="left:197px;top:20.2px;font-size:8.5px;color:#8c8c8c">...</div>
<svg width="200" height="14" viewBox="0 0 200 14" style="left:0;top:19.4px"><path d="M105.6 4.6l2.4 2.4-2.4 2.4M139 4.6l2.4 2.4-2.4 2.4M189.4 4.6l2.4 2.4-2.4 2.4" fill="none" stroke="#8c8c8c" stroke-width="0.8"/></svg>
<svg width="7.8" height="7.8" viewBox="0 0 16 16" style="left:145.2px;top:22.6px"><rect x="0.5" y="0.5" width="15" height="15" rx="1" fill="#f5c518"/><text x="4.6" y="13.6" font-family="Liberation Sans,sans-serif" font-weight="bold" font-size="8" fill="#4a3b00">JS</text></svg>
<div class="abs" style="left:44.4px;top:183.90px;width:1115px;height:14.66px;background:#494949"></div>
<div class="abs" style="left:44px;top:197.96px;width:136px;height:1px;background:#a98a2a"></div>
<div class="abs" style="left:44px;top:197.96px;width:1px;height:30.13px;background:#a98a2a"></div>
<div class="abs" style="left:176.2px;top:185.30px;width:4.4px;height:12.66px;border:0.8px solid #8a8a6a"></div>
<div class="abs" style="left:44.4px;top:215.43px;width:4.4px;height:12.06px;border:0.8px solid #b0b0b0"></div>
<div class="ln" style="top:33.85px">1</div><div class="code" style="top:33.85px"><span class="k">var</span> app = <span class="f">getApp</span><span class="b1">()</span></div>
<div class="ln" style="top:48.91px">2</div><div class="code" style="top:48.91px"><span class="k">const</span> <span class="b1">{</span></div>
<div class="ln" style="top:63.98px">3</div><div class="code" style="top:63.98px">  allData</div>
<div class="ln" style="top:79.05px">4</div><div class="code" style="top:79.05px"><span class="b1">}</span> = <span class="f">require</span><span class="b1">(</span><span class="s">&#x27;../data.js&#x27;</span><span class="b1">)</span>;</div>
<div class="ln" style="top:94.11px">5</div><div class="code" style="top:94.11px"><span class="k">const</span> <span class="b1">{</span></div>
<div class="ln" style="top:109.17px">6</div><div class="code" style="top:109.17px">  jin</div>
<div class="ln" style="top:124.24px">7</div><div class="code" style="top:124.24px"><span class="b1">}</span> = <span class="f">require</span><span class="b1">(</span><span class="s">&#x27;../jin.js&#x27;</span><span class="b1">)</span>;</div>
<div class="ln" style="top:139.31px">8</div><div class="code" style="top:139.31px"><span class="k">const</span> jinArr = jin.<span class="f">split</span><span class="b1">(</span><span class="s">&#x27;,&#x27;</span><span class="b1">)</span>;</div>
<div class="ln" style="top:154.37px">9</div><div class="code" style="top:154.37px"><span class="k">let</span> arrays = <span class="b1">[]</span>;</div>
<div class="ln" style="top:169.44px">10</div><div class="code" style="top:169.44px"><span class="k">const</span> a = <span class="f">require</span><span class="b1">(</span><span class="s">&quot;../../utils/util.js&quot;</span><span class="b1">)</span>;</div>
<div class="ln" style="top:184.50px">11</div><div class="code" style="top:184.50px"><span class="cl">for</span> <span class="b1">(</span><span class="k">let</span> id = <span class="n">0</span>; id &lt; <span class="n">81</span>; id++<span class="b1">)</span> <span class="b1">{</span></div>
<div class="ln" style="top:199.56px">12</div><div class="code" style="top:199.56px">  arrays.<span class="f">push</span><span class="b2">(</span>id<span class="b2">)</span></div>
<div class="ln" style="top:214.63px">13</div><div class="code" style="top:214.63px"><span class="b1">}</span></div>
<div class="ln" style="top:229.69px">14</div><div class="code" style="top:229.69px"></div>
<div class="ln" style="top:244.76px">15</div><div class="code" style="top:244.76px"><span class="k">function</span> <span class="f">resetArr</span><span class="b1">(</span><span class="n">arr</span><span class="b1">)</span> <span class="b1">{</span></div>
<div class="ln" style="top:259.82px">16</div><div class="code" style="top:259.82px">  <span class="k">let</span> newArr = <span class="b2">[]</span>;</div>
<div class="ln" style="top:274.89px">17</div><div class="code" style="top:274.89px">  <span class="cl">for</span> <span class="b2">(</span><span class="k">var</span> i = arr.length <span class="g">+</span> <span class="n">1</span>; i <span class="f">&gt;</span> <span class="n">0</span>;<span class="b2">)</span> <span class="b2">{</span></div>
<div class="ln" style="top:289.96px">18</div><div class="code" style="top:289.96px">    i<span class="ln2">--</span></div>
<div class="ln" style="top:305.02px">19</div><div class="code" style="top:305.02px">    <span class="k">var</span> rdm = <span class="n">Math</span>.<span class="f">floor</span><span class="b3">(</span><span class="n">Math</span>.<span class="f">random</span><span class="b1">()</span> <span class="f">*</span> arr.length<span class="b3">)</span></div>
<div class="ln" style="top:320.09px">20</div><div class="code" style="top:320.09px">    <span class="cl">if</span> <span class="b3">(</span>!newArr.<span class="f">includes</span><span class="b1">(</span>arr<span class="b2">[</span>rdm<span class="b2">]</span><span class="b1">)</span><span class="b3">)</span> <span class="b3">{</span></div>
<div class="ln" style="top:335.15px">21</div><div class="code" style="top:335.15px">      newArr.<span class="f">push</span><span class="b1">(</span>arr<span class="b2">[</span>rdm<span class="b2">]</span><span class="b1">)</span></div>
<div class="ln" style="top:350.22px">22</div><div class="code" style="top:350.22px">    <span class="b3">}</span> <span class="cl">else</span> <span class="b3">{</span></div>
<div class="ln" style="top:365.28px">23</div><div class="code" style="top:365.28px">      <span class="cl">if</span> <span class="b1">(</span>newArr.length == arr.length<span class="b1">)</span> <span class="b1">{</span></div>
<div class="ln" style="top:380.35px">24</div><div class="code" style="top:380.35px">        <span class="cl">break</span>;</div>
<div class="ln" style="top:395.41px">25</div><div class="code" style="top:395.41px">      <span class="b1">}</span></div>
<div class="ln" style="top:410.48px">26</div><div class="code" style="top:410.48px">      i++</div>
<div class="ln" style="top:425.54px">27</div><div class="code" style="top:425.54px">    <span class="b3">}</span></div>
<div class="ln" style="top:440.61px">28</div><div class="code" style="top:440.61px">  <span class="b2">}</span></div>
<div class="ln" style="top:455.67px">29</div><div class="code" style="top:455.67px">  <span class="cl">return</span> newArr;</div>
<div class="ln" style="top:470.74px">30</div><div class="code" style="top:470.74px"><span class="b1">}</span></div>
<div class="ln" style="top:485.80px">31</div><div class="code" style="top:485.80px"></div>
<div class="ln" style="top:500.87px">32</div><div class="code" style="top:500.87px"><span class="f">Page</span><span class="b1">(</span><span class="b2">{</span></div>
<div class="ln" style="top:515.93px">33</div><div class="code" style="top:515.93px">  data<span>:</span> <span class="b3">{</span></div>
<div class="abs" style="left:31px;top:33.05px;width:2.2px;height:14.56px;background:#2693ba"></div>
<svg width="6" height="4" viewBox="0 0 6 4" style="left:34.2px;top:187.90px"><path d="M0.5 0.5l2.5 2.6 2.5-2.6" fill="none" stroke="#c0c0c0" stroke-width="0.8"/></svg>
<svg width="6" height="4" viewBox="0 0 6 4" style="left:34.2px;top:248.16px"><path d="M0.5 0.5l2.5 2.6 2.5-2.6" fill="none" stroke="#c0c0c0" stroke-width="0.8"/></svg>
<svg width="6" height="4" viewBox="0 0 6 4" style="left:34.2px;top:278.29px"><path d="M0.5 0.5l2.5 2.6 2.5-2.6" fill="none" stroke="#c0c0c0" stroke-width="0.8"/></svg>
<svg width="6" height="4" viewBox="0 0 6 4" style="left:34.2px;top:323.49px"><path d="M0.5 0.5l2.5 2.6 2.5-2.6" fill="none" stroke="#c0c0c0" stroke-width="0.8"/></svg>
<svg width="6" height="4" viewBox="0 0 6 4" style="left:34.2px;top:353.62px"><path d="M0.5 0.5l2.5 2.6 2.5-2.6" fill="none" stroke="#c0c0c0" stroke-width="0.8"/></svg>
<svg width="6" height="4" viewBox="0 0 6 4" style="left:34.2px;top:368.68px"><path d="M0.5 0.5l2.5 2.6 2.5-2.6" fill="none" stroke="#c0c0c0" stroke-width="0.8"/></svg>
<svg width="6" height="4" viewBox="0 0 6 4" style="left:34.2px;top:504.26px"><path d="M0.5 0.5l2.5 2.6 2.5-2.6" fill="none" stroke="#c0c0c0" stroke-width="0.8"/></svg>
<svg width="6" height="4" viewBox="0 0 6 4" style="left:34.2px;top:519.33px"><path d="M0.5 0.5l2.5 2.6 2.5-2.6" fill="none" stroke="#c0c0c0" stroke-width="0.8"/></svg>
<div class="abs" style="left:31.6px;top:183.50px;width:2px;height:2px;background:#d03030;border-radius:1px"></div>
<div class="ig" style="left:44.40px;top:63.18px;height:15.06px;background:#484848"></div>
<div class="ig" style="left:44.40px;top:108.38px;height:15.06px;background:#484848"></div>
<div class="ig" style="left:44.40px;top:259.02px;height:210.91px;background:#484848"></div>
<div class="ig" style="left:52.64px;top:289.16px;height:150.65px;background:#484848"></div>
<div class="ig" style="left:60.89px;top:334.35px;height:15.06px;background:#484848"></div>
<div class="ig" style="left:60.89px;top:364.48px;height:60.26px;background:#484848"></div>
<div class="ig" style="left:69.13px;top:379.55px;height:15.06px;background:#484848"></div>
<div class="ig" style="left:44.40px;top:515.13px;height:15.06px;background:#484848"></div>
<svg width="160" height="60" viewBox="0 0 160 60" style="left:282px;top:337px"><circle cx="29.5" cy="29.4" r="25.7" fill="#e8a917"/><path d="M44.5 8.6A25.7 25.7 0 0 0 13.1 49.2L9.3 37.3Q9 33 12.4 28.3Q14.5 23.5 20.7 21.4Q25 20.5 31.3 22.2L37.3 12.75z" fill="#e85a2e"/><path d="M26 9.7L45.6 9.3L46.4 10.1L32.8 35.1L43.4 34.7Q47 34.2 49.4 32L49.4 32.4Q48.5 37 44.5 39.2Q42 39.8 41 39.6L23 38.1L22.9 37.7L37.3 12.75L24.9 13.5z" fill="#2e2e2e"/><path d="M31.3 22.2Q25 20.5 20.7 21.4Q14.5 23.5 12.4 28.3Q9 33 9.3 37.3Q9.5 42.5 11.6 46.4L14.6 50.2Q18.5 52.2 23 51.7Q27.5 51.2 30.5 49.4Q32.8 48 33.9 46Q31 47 28.3 47.2Q24.5 47.5 21.4 46.4Q19 44.8 18.4 41.9Q17.3 38 17.8 34.3Q18.3 30.8 19.9 28.3Q21.8 26.5 24.5 26L29 26z" fill="#2e2e2e"/><text x="63.7" y="42.9" font-family="Noto Sans CJK SC,Liberation Sans,sans-serif" font-weight="900" font-size="30.8" fill="#e8a917" transform="skewX(-7)" style="letter-spacing:-0.2px">愁资源</text></svg>
</div>
<div id="panel">
<div class="abs" style="left:0;top:0;width:1159px;height:1px;background:#3e3e3e"></div>
<div class="t ptab" style="left:13px;color:#f0f0f0">调试器</div>
<div class="t ptab" style="left:45.8px;">问题</div>
<div class="t ptab" style="left:72px;">输出</div>
<div class="t ptab" style="left:98.4px;">终端</div>
<div class="abs" style="left:13px;top:20px;width:21px;height:1px;background:#e0e0e0"></div>
<svg width="40" height="12" viewBox="0 0 40 12" style="left:1126px;top:5.4px"><path d="M2.6 7.6l3-3 3 3" fill="none" stroke="#ddd" stroke-width="0.9"/><path d="M22.6 3.2l5.4 5.4M28 3.2l-5.4 5.4" stroke="#ddd" stroke-width="0.9"/></svg>
<div class="abs" style="left:0;top:21.5px;width:1159px;height:17.4px;background:#333;border-bottom:1px solid #3f3f3f"></div>
<div class="abs" style="left:60.2px;top:21.5px;width:41px;height:16.4px;background:#000"></div>
<div class="t dt" style="left:32.9px;">Wxml</div>
<div class="t dt" style="left:67px;color:#fff">Console</div>
<div class="t dt" style="left:108.6px;">Sources</div>
<div class="t dt" style="left:149.6px;">Network</div>
<div class="t dt" style="left:192.7px;">Memory</div>
<div class="t dt" style="left:235.5px;">Security</div>
<div class="t dt" style="left:276.9px;">Mock</div>
<div class="t dt" style="left:310px;">AppData</div>
<div class="t dt" style="left:354px;">Audits</div>
<div class="t dt" style="left:389.4px;">Sensor</div>
<div class="t dt" style="left:426.6px;">Storage</div>
<div class="t dt" style="left:467px;">Trace</div>
<svg width="12" height="12" viewBox="0 0 12 12" style="left:5px;top:24.4px"><path d="M5.2 8.4H1.6V1.6h6.8v3.2" fill="none" stroke="#aaa" stroke-width="0.8"/><path d="M5.6 4.8l4.6 2-2 0.6 1.6 2-0.8 0.6-1.6-2-1.2 1.6z" fill="#bbb"/></svg>
<svg width="30" height="14" viewBox="0 0 30 14" style="left:1130px;top:23px"><path d="M-1.3 3v7" stroke="#444" stroke-width="0.7"/><circle cx="10.6" cy="3.6" r="0.7" fill="#bbb"/><circle cx="10.6" cy="6.6" r="0.7" fill="#bbb"/><circle cx="10.6" cy="9.6" r="0.7" fill="#bbb"/><path d="M25 4.4h5v5.6h-5zM26.6 4.2V2.8h4" fill="none" stroke="#bbb" stroke-width="1"/></svg>
<div class="abs" style="left:0;top:38.9px;width:1159px;height:16.9px;background:#333;border-bottom:1px solid #454545"></div>
<svg width="160" height="14" viewBox="0 0 160 14" style="left:0;top:40.5px"><rect x="5.4" y="3" width="8.6" height="7.6" rx="0.6" fill="none" stroke="#aaa" stroke-width="0.8"/><path d="M7.9 3v7.6" stroke="#aaa" stroke-width="0.8"/><path d="M9.6 5.2l2.4 1.6-2.4 1.6z" fill="#aaa"/><circle cx="28.2" cy="6.8" r="3.8" fill="none" stroke="#aaa" stroke-width="0.9"/><path d="M25.6 4.2l5.2 5.2" stroke="#aaa" stroke-width="0.9"/><path d="M119.2 5.2h4.6l-2.3 3.4z" fill="#aaa"/><path d="M130.4 2.4v9" stroke="#444" stroke-width="0.7"/><path d="M137.4 6.8q5-5 10 0q-5 5-10 0z" fill="none" stroke="#bbb" stroke-width="0.9"/><circle cx="142.4" cy="6.8" r="1.7" fill="#bbb"/></svg>
<div class="t" style="left:45.3px;top:41.4px;font-size:7.6px;color:#c0c0c0">top</div>
<div class="abs" style="left:159.6px;top:41.8px;width:244px;height:11.4px;background:#2a2a2a"></div>
<div class="t" style="left:162.8px;top:41.8px;font-size:7.4px;color:#777">Filter</div>
<div class="t" style="left:409.3px;top:41.2px;font-size:7.4px;color:#b8b8b8">Default levels <span style="font-size:5.4px;position:relative;top:-0.8px">▼</span></div>
<svg width="14" height="12" viewBox="0 0 14 12" style="left:1150px;top:41px"><path d="M2 6.4h-0.1" stroke="#444"/><circle cx="8.6" cy="6" r="3" fill="none" stroke="#bbb" stroke-width="2.2" stroke-dasharray="1.6 0.9"/><circle cx="8.6" cy="6" r="2.4" fill="none" stroke="#bbb" stroke-width="1.2"/></svg>
<div class="abs" style="left:1145.5px;top:41px;width:1px;height:11px;background:#444"></div>
<div class="abs" style="left:0;top:56.2px;width:1159px;height:202px;background:#242424"></div>
<svg width="6" height="8" viewBox="0 0 6 8" style="left:5.8px;top:59px"><path d="M1 1.4l2.2 2.2-2.2 2.2" fill="none" stroke="#3a8ee6" stroke-width="1.2"/></svg>
</div>
</body></html>
